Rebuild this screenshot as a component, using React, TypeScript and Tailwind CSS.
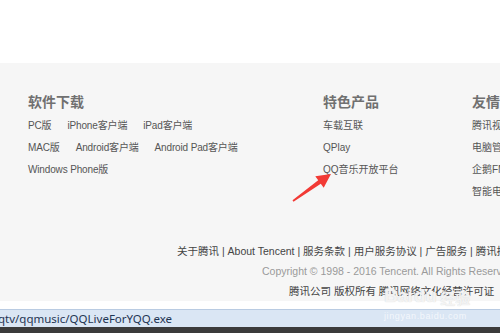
import React from "react";

const cjk = { fontFamily: '"Liberation Sans", "Noto Sans CJK SC", sans-serif' };

const software = [
  ["PC版", "iPhone客户端", "iPad客户端"],
  ["MAC版", "Android客户端", "Android Pad客户端"],
  ["Windows Phone版"],
];

const featured = ["车载互联", "QPlay", "QQ音乐开放平台"];
const friends = ["腾讯视频", "电脑管家", "企鹅FM", "智能电视"];

function Heading({ children }: { children: React.ReactNode }) {
  return (
    <h3 className="h-[20px] leading-[20px] text-[14px] font-semibold text-[#707070] mb-[2px] whitespace-nowrap">
      {children}
    </h3>
  );
}

function Arrow() {
  // red annotation arrow pointing at "QQ音乐开放平台"
  return (
    <svg
      className="absolute left-[285px] top-[168px] pointer-events-none"
      width="50"
      height="40"
      viewBox="285 168 50 40"
    >
      <polygon
        points="292.5,200.3 318.2,180.2 315.3,176.2 331,174 323.7,187.8 320.8,183.8 293.5,201.7"
        fill="#f23a35"
      />
    </svg>
  );
}

function Watermark() {
  return (
    <div className="absolute left-[384px] top-[286px] pointer-events-none select-none text-white/75">
      <div className="flex items-end gap-[2px] leading-none">
        <span
          className="text-[19px] font-bold tracking-[-0.5px]"
          style={{ fontFamily: '"Liberation Sans", sans-serif', textShadow: "0 0 1px #ccc" }}
        >
          Bai
        </span>
        <span
          className="text-[19px] font-bold tracking-[-0.5px]"
          style={{ fontFamily: '"Liberation Sans", sans-serif', textShadow: "0 0 1px #ccc" }}
        >
          du
        </span>
        <span
          className="text-[15px] font-bold ml-[2px]"
          style={{ fontFamily: '"Noto Sans CJK SC", sans-serif', textShadow: "0 0 1px #ccc" }}
        >
          经验
        </span>
      </div>
      <div
        className="text-[9px] tracking-[0.6px] mt-[5px] text-white/70"
        style={{ fontFamily: '"Liberation Sans", sans-serif' }}
      >
        jingyan.baidu.com
      </div>
    </div>
  );
}

export default function App() {
  return (
    <div className="relative w-[500px] h-[333px] overflow-hidden bg-white" style={cjk}>
      <div className="h-[63px] bg-white" />

      <footer className="h-[238px] bg-[#f6f6f6] pt-[29px] overflow-hidden">
        <div className="flex">
          {/* 软件下载 */}
          <div className="w-[323px] shrink-0 pl-[28px]">
            <Heading>软件下载</Heading>
            {software.map((row, i) => (
              <div key={i} className="flex h-[22px] items-center gap-[16px] text-[10px] tracking-[-0.15px] text-[#555]">
                {row.map((item) => (
                  <span key={item} className="whitespace-nowrap">
                    {item}
                  </span>
                ))}
              </div>
            ))}
          </div>

          {/* 特色产品 */}
          <div className="w-[149px] shrink-0">
            <Heading>特色产品</Heading>
            {featured.map((item) => (
              <div key={item} className="h-[22px] flex items-center text-[10px] text-[#555] whitespace-nowrap">
                {item}
              </div>
            ))}
          </div>

          {/* 友情链接 */}
          <div className="shrink-0">
            <Heading>友情链接</Heading>
            {friends.map((item) => (
              <div key={item} className="h-[22px] flex items-center text-[10px] text-[#555] whitespace-nowrap">
                {item}
              </div>
            ))}
          </div>
        </div>

        <div className="mt-[39px] text-[10.5px] leading-[20px] whitespace-nowrap">
          <p className="pl-[177px] text-[#444]">
            关于腾讯 | About Tencent | 服务条款 | 用户服务协议 | 广告服务 | 腾讯招聘 | 腾讯公益
          </p>
          <p className="pl-[262px] text-[#9a9a9a]">
            Copyright © 1998 - 2016 Tencent. All Rights Reserved.
          </p>
          <p className="pl-[289px] text-[#444]">腾讯公司 版权所有 腾讯网络文化经营许可证</p>
        </div>
      </footer>

      <div className="h-[8px] bg-white" />

      {/* browser status bar */}
      <div className="h-[18px] bg-[#dae6f4] border-t border-[#b9cbe2] flex items-center">
        <span
          className="text-[11.5px] text-[#1f3553] whitespace-nowrap -ml-[2px]"
          style={{ fontFamily: '"Noto Sans", "Open Sans", sans-serif' }}
        >
          qtv/qqmusic/QQLiveForYQQ.exe
        </span>
      </div>
      <div className="h-[6px] bg-[#3b3b3b]" />

      <Arrow />
      <Watermark />
    </div>
  );
}
